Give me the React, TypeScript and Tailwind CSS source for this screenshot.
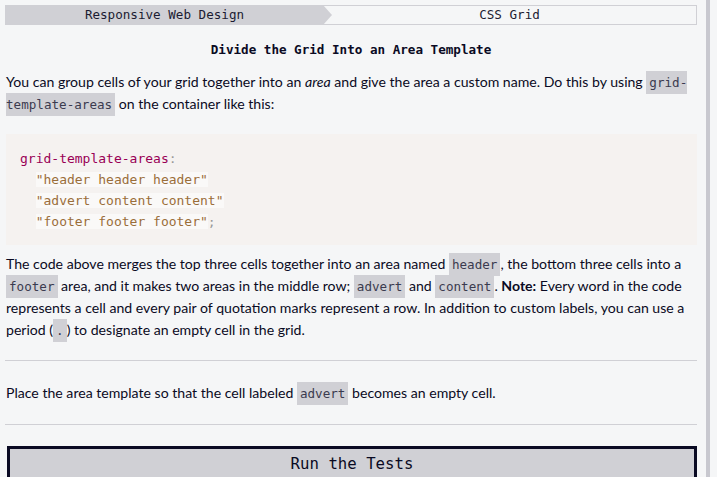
import React from "react";

const mono = "font-['DejaVu_Sans_Mono',monospace]";

function Code({ children }: { children: React.ReactNode }) {
    return (
        <code className={`${mono} bg-[#d0d0d5] text-[#3b3b4f] text-[12.6px] leading-none px-[3px] py-[4px]`}>
            {children}
        </code>
    );
}

export default function App() {
    return (
        <div className="flex w-[717px] h-[477px] overflow-hidden bg-[#f5f6f7] text-[#0a0a23]">
            <div className="w-[706px] shrink-0 pl-[5px] pr-[9px] flex flex-col">
                <nav className={`${mono} flex h-5 mt-[5px] text-[12.6px] text-[#1b1b32]`}>
                    <div className="relative z-10 w-[327px] shrink-0 bg-[#d0d0d5] flex items-center justify-center pr-[8px] [clip-path:polygon(0_0,calc(100%-9px)_0,100%_50%,calc(100%-9px)_100%,0_100%)]">
                        Responsive Web Design
                    </div>
                    <div className="flex-1 -ml-[10px] border border-[#d0d0d5] flex items-center justify-center">
                        CSS Grid
                    </div>
                </nav>

                <h1 className={`${mono} mt-[15px] text-center font-bold text-[12.6px] leading-5`}>
                    Divide the Grid Into an Area Template
                </h1>

                <div className="font-['Lato',sans-serif] text-[14.1px] leading-[22px]">
                    <p className="mt-[11px] pl-[1px]">
                        You can group cells of your grid together into an <em>area</em> and give the area a custom name. Do this by using <Code>grid-template-areas</Code> on the container like this:
                    </p>

                    <pre className={`${mono} mt-[19px] ml-[1px] bg-[#f5f2f0] text-[13px] leading-[21px] px-[14px] pt-[14px] pb-[13px] whitespace-pre`}>
                        <span className="text-[#990055]">grid-template-areas</span>
                        <span className="text-[#999999]">:</span>
                        {"\n  "}
                        <span className="text-[#9a6e3a] bg-white/50">"header header header"</span>
                        {"\n  "}
                        <span className="text-[#9a6e3a] bg-white/50">"advert content content"</span>
                        {"\n  "}
                        <span className="text-[#9a6e3a] bg-white/50">"footer footer footer"</span>
                        <span className="text-[#999999]">;</span>
                    </pre>

                    <p className="mt-[8px] pl-[1px]">
                        The code above merges the top three cells together into an area named <Code>header</Code>, the bottom three cells into a <Code>footer</Code> area, and it makes two areas in the middle row; <Code>advert</Code> and <Code>content</Code>. <strong>Note:</strong> Every word in the code represents a cell and every pair of quotation marks represent a row. In addition to custom labels, you can use a period (<Code>.</Code>) to designate an empty cell in the grid.
                    </p>

                    <hr className="mt-[19px] border-t border-[#d0d0d5]" />

                    <p className="mt-[21px] pl-[1px]">
                        Place the area template so that the cell labeled <Code>advert</Code> becomes an empty cell.
                    </p>

                    <hr className="mt-[20px] border-t border-[#d0d0d5]" />
                </div>

                <button className={`${mono} mt-[21px] ml-[2px] h-[40px] shrink-0 bg-[#d0d0d5] border-[3px] border-[#0a0a23] text-[15.7px] text-[#0a0a23] pb-[5px]`}>
                    Run the Tests
                </button>
            </div>
            <div className="w-[4px] h-[477px] shrink-0 bg-[#c8c8cf]" />
        </div>
    );
}
